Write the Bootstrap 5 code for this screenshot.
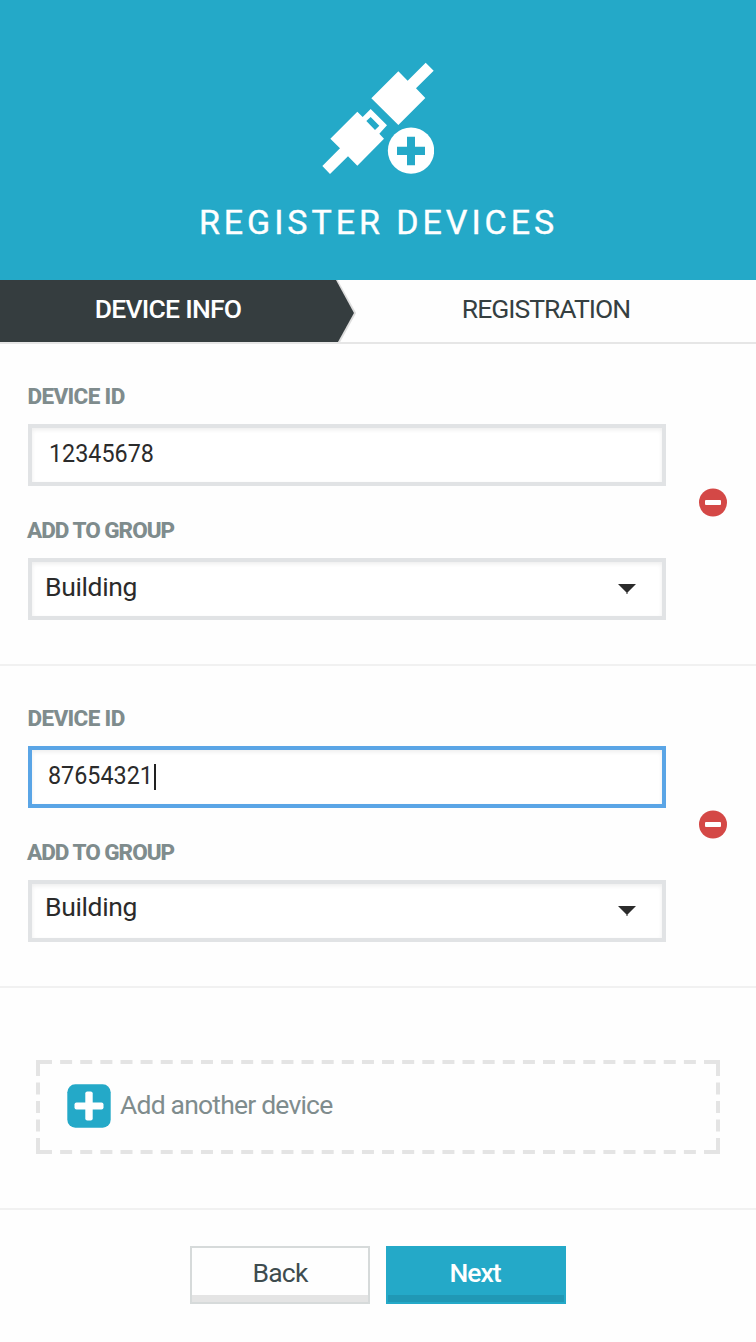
<!DOCTYPE html>
<html lang="en">
<head>
<meta charset="utf-8">
<meta name="viewport" content="width=device-width, initial-scale=1">
<title>Register Devices</title>
<link href="https://cdn.jsdelivr.net/npm/bootstrap@5.3.0/dist/css/bootstrap.min.css" rel="stylesheet">
<style>
  body { font-family: Roboto, "Liberation Sans", sans-serif; font-size: 26.5px; line-height: 32px; color: #2b2b2b; background: #fefefe; overflow-x: hidden; }
  .hero { background: #24a9c8; height: 280px; padding-top: 62px; }
  .hero h1 { font-size: 34px; line-height: 40px; font-weight: 400; letter-spacing: 3.95px; margin: 28px 0 0 1px; -webkit-text-stroke: .4px #fff; }
  .steps { height: 64px; border-bottom: 2px solid #e6e6e6; background: #fefefe; position: relative; }
  .step { padding: 13px 42px 0 0; color: #353f41; letter-spacing: -1px; }
  .step-on { color: #fff; font-weight: 500; letter-spacing: -.75px; position: relative; z-index: 1; }
  .step-bg { position: absolute; left: 0; top: 0; }
  .device { height: 322px; border-bottom: 2px solid #f1f1f1; padding: 36px 28px 0; }
  .fields { width: 638px; }
  .remove { margin-top: 107px; }
  .tag { display: block; font-size: 22.5px; line-height: 32px; font-weight: 800; color: #7f8c8d; letter-spacing: -.65px; margin-bottom: 12px; margin-left: -.5px; }
  .tag-group { letter-spacing: -1px; margin-top: 28px; margin-left: -1px; }
  .field { height: 62px; border: 4px solid #e1e3e5; border-radius: 0; background: #fff; box-shadow: inset 0 2px 4px rgba(0,0,0,.07); padding: 9px 17px 0; font-size: 26.5px; line-height: 32px; color: #2b2b2b; }
  .field-on { border-color: #5aa5e6; }
  .digits { display: inline-block; transform: scaleX(.88); transform-origin: left; width: 105px; }
  .field-on .digits { margin-left: -1px; }
  .cursor { width: 2px; height: 26px; background: #222; margin-top: 5px; margin-left: 1px; }
  .pick { padding: 9px 25px 0 13px; letter-spacing: -.35px; }
  .pick-high { padding-top: 7px; }
  .pick svg { margin-top: 12px; }
  .pick-high svg { margin-top: 14px; }
  .more { height: 222px; border-bottom: 2px solid #f1f1f1; padding: 72px 36px 0; }
  .add-box { height: 94px; color: #7f8c8d; letter-spacing: -.8px; padding: 24px 31px 0; gap: 9px; }
  .add-box span { padding-top: 5px; }
  .add-box .dashes { position: absolute; left: 0; top: 0; }
  .actions { padding-top: 36px; gap: 16px; height: 132px; }
  .act { width: 180px; height: 58px; border-radius: 0; border: 2px solid #d6dada; background: #fefefe; box-shadow: inset 0 -7px #e4e4e4; font-size: 26.5px; line-height: 32px; padding: 9px 0 0; color: #3e4c4f; letter-spacing: -.8px; display: flex; justify-content: center; align-items: flex-start; }
  .act-main { background: #24a9c8; border-color: #24a9c8; box-shadow: inset 0 -7px #2098b5; color: #fff; font-weight: 500; letter-spacing: -1px; padding-right: 2px; }
</style>
</head>
<body>
<header class="hero text-white text-center">
  <svg class="d-block mx-auto" width="112" height="112" viewBox="36 36 336 336" fill="#fff" aria-hidden="true">
    <path d="M347 38 371 62 318 115 346 144 265 225 184 145 265 64 293 92Z"/>
    <path fill-rule="evenodd" d="M142 185 158 201 182 177 231 226 208 251 222 266 142 347 114 319 60 372 37 348 90 295 61 266ZM182 201 169 213 195 240 208 227Z"/>
    <circle cx="303" cy="302" r="69.5"/>
    <path fill="#24a9c8" d="M291 260h24v30h30v25h-30v31h-24v-31h-30v-25h30z"/>
  </svg>
  <h1>REGISTER DEVICES</h1>
</header>

<nav class="steps d-flex text-center">
  <svg class="step-bg" width="358" height="62" viewBox="0 0 358 62" aria-hidden="true">
    <path d="M336.500 0 355 33 339 62" fill="none" stroke="#dedede" stroke-width="2"/>
    <path d="M0 0H336L354 33 338 62H0Z" fill="#353d3f"/>
  </svg>
  <div class="step step-on w-50">DEVICE INFO</div>
  <div class="step w-50">REGISTRATION</div>
</nav>

<main>
  <section class="device d-flex justify-content-between">
    <div class="fields">
      <span class="tag">DEVICE ID</span>
      <div class="field d-flex"><span class="digits">12345678</span></div>
      <span class="tag tag-group">ADD TO GROUP</span>
      <div class="field pick d-flex justify-content-between"><span>Building</span>
        <svg width="20" height="12" viewBox="0 0 20 12"><path d="M1 1H19L10.500 9.500V11H9.500V9.500Z" fill="#2b2b2b"/></svg></div>
    </div>
    <svg class="remove" width="30" height="30" viewBox="0 0 30 30"><circle cx="15" cy="15.500" r="14" fill="#d44846"/><rect x="7" y="13" width="16" height="5" rx="1" fill="#fff"/></svg>
  </section>

  <section class="device d-flex justify-content-between">
    <div class="fields">
      <span class="tag">DEVICE ID</span>
      <div class="field field-on d-flex"><span class="digits">87654321</span><span class="cursor"></span></div>
      <span class="tag tag-group">ADD TO GROUP</span>
      <div class="field pick pick-high d-flex justify-content-between"><span>Building</span>
        <svg width="20" height="12" viewBox="0 0 20 12"><path d="M1 1H19L10.500 9.500V11H9.500V9.500Z" fill="#2b2b2b"/></svg></div>
    </div>
    <svg class="remove" width="30" height="30" viewBox="0 0 30 30"><circle cx="15" cy="15.500" r="14" fill="#d44846"/><rect x="7" y="13" width="16" height="5" rx="1" fill="#fff"/></svg>
  </section>

  <section class="more">
    <div class="add-box d-flex position-relative">
      <svg class="dashes" width="684" height="94" fill="none" stroke="#e4e4e4" stroke-width="4">
        <path d="M4 2H680M4 92H680" stroke-dasharray="12 8.121"/>
        <path d="M2 4V90M682 4V90" stroke-dasharray="12 6.500"/>
        <path d="M0 2H4M680 2H684M0 92H4M680 92H684"/>
      </svg>
      <svg width="44" height="44" viewBox="0 0 44 44"><rect x=".3" y=".3" width="43.400" height="43.400" rx="8" fill="#24a9c8"/><rect x="18.300" y="7.500" width="7.400" height="29" rx="2" fill="#fff"/><rect x="7.500" y="18.500" width="29" height="7" rx="2" fill="#fff"/></svg>
      <span>Add another device</span>
    </div>
  </section>
</main>

<footer class="actions d-flex justify-content-center">
  <button type="button" class="btn act">Back</button>
  <button type="button" class="btn act act-main">Next</button>
</footer>
<script src="https://cdn.jsdelivr.net/npm/bootstrap@5.3.0/dist/js/bootstrap.bundle.min.js"></script>
</body>
</html>
